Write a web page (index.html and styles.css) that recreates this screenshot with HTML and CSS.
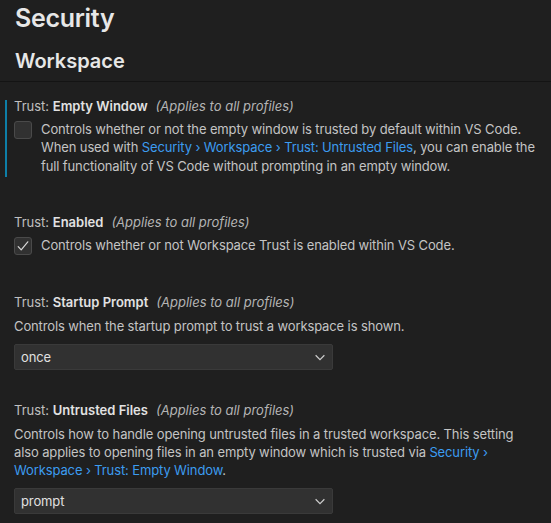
FILE: index.html
```html
<!DOCTYPE html>
<html>
<head>
<meta charset="utf-8">
<link rel="stylesheet" href="styles.css">
</head>
<body>
<div class="header">
  <div class="title">Security</div>
  <div class="subtitle">Workspace</div>
</div>
<div class="list">
  <div class="item focused">
    <div class="item-title"><span class="cat">Trust: </span><span class="label">Empty Window</span><span class="scope">(Applies to all profiles)</span></div>
    <div class="bool-row">
      <span class="checkbox"></span>
      <div class="desc">Controls whether or not the empty window is trusted by default within VS Code. When used with <a class="link">Security › Workspace › Trust: Untrusted Files</a>, you can enable the full functionality of VS Code without prompting in an empty window.</div>
    </div>
  </div>
  <div class="item">
    <div class="item-title"><span class="cat">Trust: </span><span class="label">Enabled</span><span class="scope">(Applies to all profiles)</span></div>
    <div class="bool-row">
      <span class="checkbox">
        <svg width="16" height="16" viewBox="0 0 16 16"><path d="M3.2 8.6 L6.2 11.8 L12.8 3.8" fill="none" stroke="#d8d8d8" stroke-width="1.2" stroke-linecap="round" stroke-linejoin="round"/></svg>
      </span>
      <div class="desc">Controls whether or not Workspace Trust is enabled within VS Code.</div>
    </div>
  </div>
  <div class="item">
    <div class="item-title"><span class="cat">Trust: </span><span class="label">Startup Prompt</span><span class="scope">(Applies to all profiles)</span></div>
    <div class="desc block">Controls when the startup prompt to trust a workspace is shown.</div>
    <div class="select"><span>once</span>
      <svg class="chev" width="14" height="14" viewBox="0 0 16 16"><path d="M3 6 L8 11 L13 6" fill="none" stroke="#cccccc" stroke-width="1.4"/></svg>
    </div>
  </div>
  <div class="item after-select">
    <div class="item-title"><span class="cat">Trust: </span><span class="label">Untrusted Files</span><span class="scope">(Applies to all profiles)</span></div>
    <div class="desc block">Controls how to handle opening untrusted files in a trusted workspace. This setting also applies to opening files in an empty window which is trusted via <a class="link">Security › Workspace › Trust: Empty Window</a>.</div>
    <div class="select"><span>prompt</span>
      <svg class="chev" width="14" height="14" viewBox="0 0 16 16"><path d="M3 6 L8 11 L13 6" fill="none" stroke="#cccccc" stroke-width="1.4"/></svg>
    </div>
  </div>
</div>
</body>
</html>
```
FILE: styles.css
```css
html, body {
  margin: 0;
  padding: 0;
  background: #1f1f1f;
}
body {
  font-family: Inter, "Noto Sans", sans-serif;
  color: #cccccc;
  font-size: 13px;
  letter-spacing: -0.12px;
  width: 551px;
  height: 523px;
  overflow: hidden;
}
.header {
  padding: 0 0 0 15px;
  height: 82px;
  border-bottom: 1px solid #141414;
  box-sizing: border-box;
}
.title {
  font-size: 25px;
  font-weight: 600;
  letter-spacing: -0.3px;
  color: #e7e7e7;
  line-height: 32px;
  padding-top: 2px;
}
.subtitle {
  font-size: 20px;
  font-weight: 600;
  letter-spacing: 0;
  color: #e7e7e7;
  line-height: 24px;
  padding-top: 15px;
}
.list {
  padding-top: 14px;
}
.item {
  position: relative;
  padding: 1px 10px 0 14px;
}
.item + .item {
  margin-top: 37px;
}
.item.after-select {
  margin-top: 30px;
}
.item.focused::before {
  content: "";
  position: absolute;
  left: 5px;
  top: 4px;
  bottom: -2px;
  width: 2px;
  background: #0e7fa8;
}
.item-title {
  line-height: 18px;
  color: #c0c0c0;
  font-size: 13px;
  letter-spacing: 0;
}
.label {
  font-weight: 600;
  color: #e2e2e2;
}
.scope {
  font-style: italic;
  color: #b4b4b4;
  margin-left: 8px;
}
.bool-row {
  display: flex;
  align-items: flex-start;
  margin-top: 5px;
}
.checkbox {
  flex: none;
  width: 16px;
  height: 16px;
  margin-top: 1px;
  margin-right: 9px;
  background: #313131;
  border: 1px solid #4a4a4a;
  border-radius: 3px;
  display: flex;
  align-items: center;
  justify-content: center;
}
.desc {
  line-height: 18.4px;
  color: #c4c4c4;
}
.desc.block {
  margin-top: 6px;
}
.link {
  color: #3c9cf0;
  text-decoration: none;
}
.select {
  margin-top: 8px;
  width: 319px;
  height: 26px;
  box-sizing: border-box;
  background: #313131;
  border: 1px solid #3a3a3a;
  border-radius: 2px;
  display: flex;
  align-items: center;
  justify-content: space-between;
  padding: 0 5px 0 6px;
  color: #e0e0e0;
}
.chev {
  display: block;
}
```
